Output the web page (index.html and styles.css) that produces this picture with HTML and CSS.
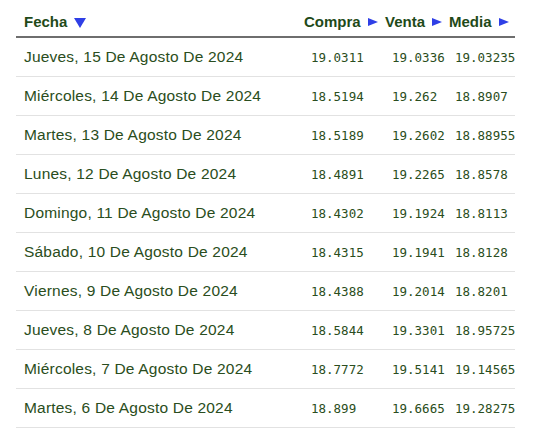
FILE: index.html
```html
<!DOCTYPE html>
<html lang="es">
<head>
<meta charset="utf-8">
<link rel="stylesheet" href="styles.css">
</head>
<body>
<table class="rates">
  <colgroup>
    <col class="c-date"><col class="c-buy"><col class="c-sell"><col class="c-mid">
  </colgroup>
  <thead>
    <tr>
      <th class="h-date">Fecha <span class="tri-down"></span></th>
      <th>Compra <span class="tri-right"></span></th>
      <th>Venta <span class="tri-right"></span></th>
      <th>Media <span class="tri-right"></span></th>
    </tr>
  </thead>
  <tbody>
    <tr><td class="d">Jueves, 15 De Agosto De 2024</td><td class="n">19.0311</td><td class="n">19.0336</td><td class="n m">19.03235</td></tr>
    <tr><td class="d">Miércoles, 14 De Agosto De 2024</td><td class="n">18.5194</td><td class="n">19.262</td><td class="n m">18.8907</td></tr>
    <tr><td class="d">Martes, 13 De Agosto De 2024</td><td class="n">18.5189</td><td class="n">19.2602</td><td class="n m">18.88955</td></tr>
    <tr><td class="d">Lunes, 12 De Agosto De 2024</td><td class="n">18.4891</td><td class="n">19.2265</td><td class="n m">18.8578</td></tr>
    <tr><td class="d">Domingo, 11 De Agosto De 2024</td><td class="n">18.4302</td><td class="n">19.1924</td><td class="n m">18.8113</td></tr>
    <tr><td class="d">Sábado, 10 De Agosto De 2024</td><td class="n">18.4315</td><td class="n">19.1941</td><td class="n m">18.8128</td></tr>
    <tr><td class="d">Viernes, 9 De Agosto De 2024</td><td class="n">18.4388</td><td class="n">19.2014</td><td class="n m">18.8201</td></tr>
    <tr><td class="d">Jueves, 8 De Agosto De 2024</td><td class="n">18.5844</td><td class="n">19.3301</td><td class="n m">18.95725</td></tr>
    <tr><td class="d">Miércoles, 7 De Agosto De 2024</td><td class="n">18.7772</td><td class="n">19.5141</td><td class="n m">19.14565</td></tr>
    <tr><td class="d">Martes, 6 De Agosto De 2024</td><td class="n">18.899</td><td class="n">19.6665</td><td class="n m">19.28275</td></tr>
  </tbody>
</table>
</body>
</html>
```

FILE: styles.css
```css
html, body {
  margin: 0;
  padding: 0;
  background: #ffffff;
}

.rates {
  margin-left: 16px;
  width: 499px;
  border-collapse: collapse;
  table-layout: fixed;
  font-family: "Liberation Sans", Arial, sans-serif;
  color: #24481d;
}

.c-date { width: 284px; }
.c-buy { width: 81px; }
.c-sell { width: 64px; }
.c-mid { width: 70px; }

.rates th {
  text-align: left;
  font-size: 15px;
  font-weight: bold;
  line-height: 17px;
  height: 17px;
  padding: 13px 0 6px 4px;
  border-bottom: 2px solid #6e6e6e;
  white-space: nowrap;
  color: #1f4a19;
}

.rates th.h-date { padding-left: 8px; }

.tri-down {
  display: inline-block;
  width: 0;
  height: 0;
  border-left: 6px solid transparent;
  border-right: 6px solid transparent;
  border-top: 10px solid #2f3fe6;
  margin-left: 2px;
  vertical-align: -1px;
}

.tri-right {
  display: inline-block;
  width: 0;
  height: 0;
  border-top: 4px solid transparent;
  border-bottom: 4px solid transparent;
  border-left: 10px solid #2f3fe6;
  margin-left: 3px;
  vertical-align: 1px;
}

.rates td {
  height: 38px;
  padding: 0;
  border-bottom: 1px solid #e2e2e2;
  white-space: nowrap;
  vertical-align: middle;
}

.rates td.d {
  padding-left: 8px;
  font-size: 15.5px;
  letter-spacing: 0.2px;
  color: #2a4d20;
}

.rates td.n {
  padding-left: 11px;
  font-family: "DejaVu Sans Mono", "Liberation Mono", monospace;
  font-size: 12.5px;
  color: #2a4d20;
}

.rates td.m { padding-left: 10px; }
```
